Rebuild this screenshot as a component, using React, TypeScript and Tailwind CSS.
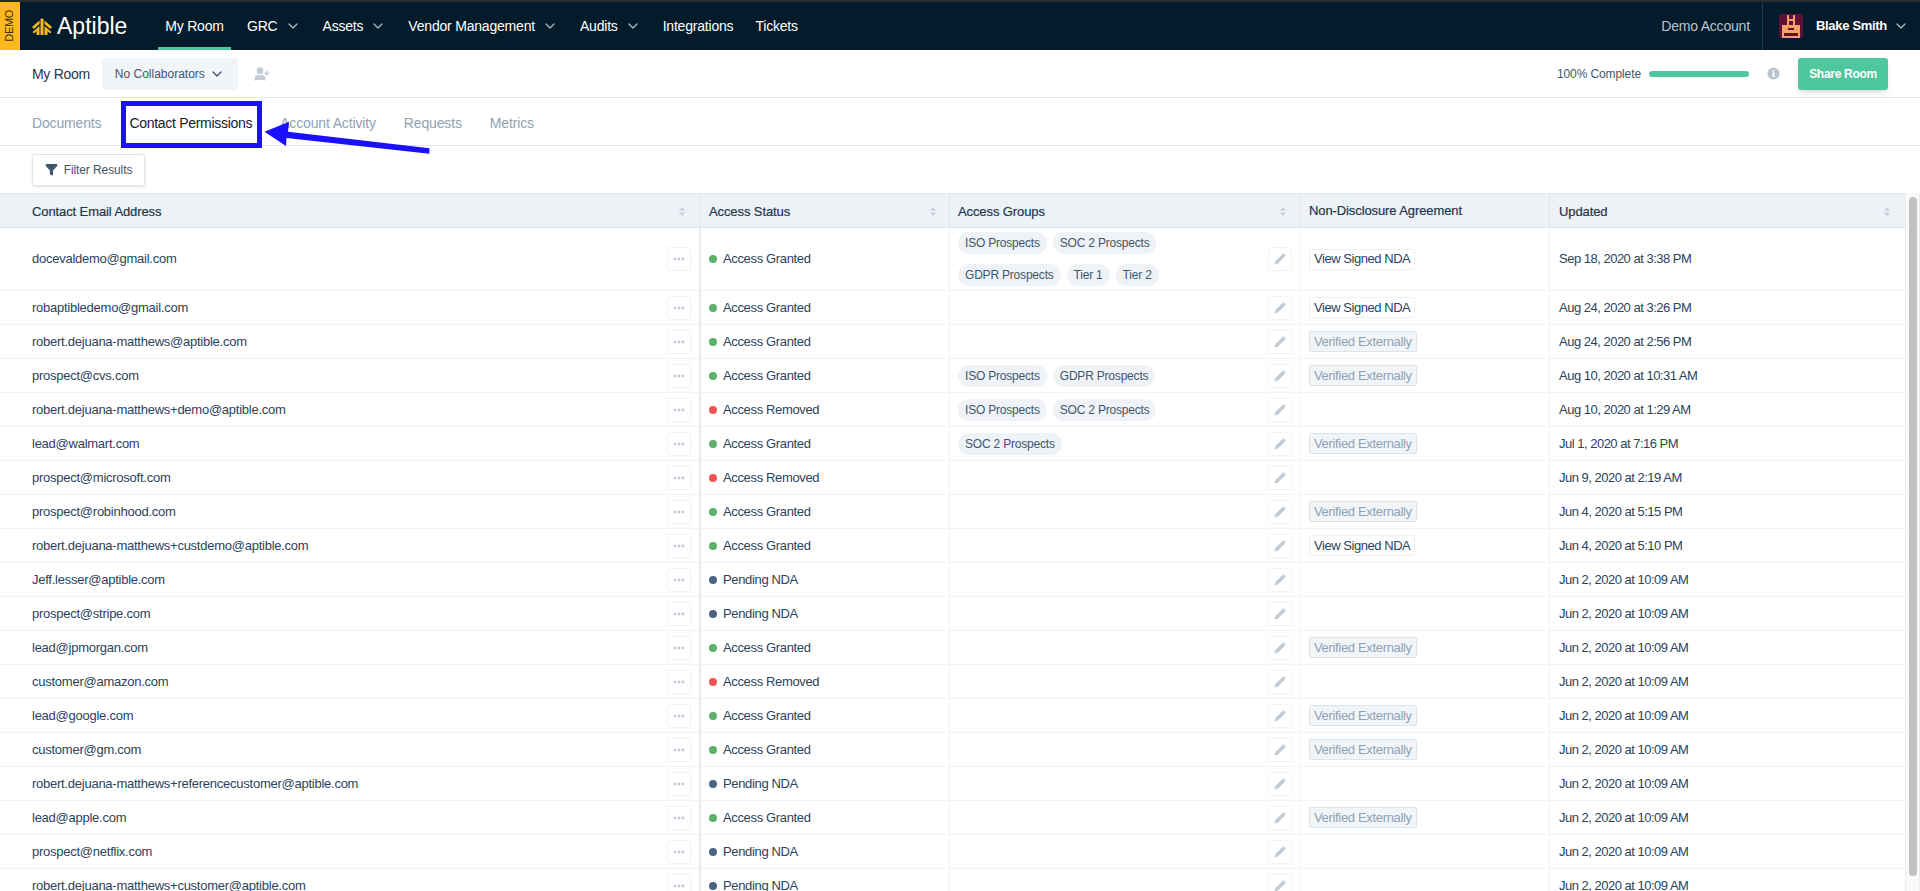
import { ChevronDown, Filter, Pencil, UserPlus } from 'lucide-react';

type Status = 'granted' | 'removed' | 'pending';
type Nda = 'signed' | 'verified' | null;

interface Row {
    email: string;
    status: Status;
    groups: string[][];
    nda: Nda;
    updated: string;
}

const navItems = [
    { label: 'GRC', caret: true },
    { label: 'Assets', caret: true },
    { label: 'Vendor Management', caret: true },
    { label: 'Audits', caret: true },
    { label: 'Integrations', caret: false },
    { label: 'Tickets', caret: false },
];

const rows: Row[] = [
    { email: 'docevaldemo@gmail.com', status: 'granted', groups: [['ISO Prospects', 'SOC 2 Prospects'], ['GDPR Prospects', 'Tier 1', 'Tier 2']], nda: 'signed', updated: 'Sep 18, 2020 at 3:38 PM' },
    { email: 'robaptibledemo@gmail.com', status: 'granted', groups: [], nda: 'signed', updated: 'Aug 24, 2020 at 3:26 PM' },
    { email: 'robert.dejuana-matthews@aptible.com', status: 'granted', groups: [], nda: 'verified', updated: 'Aug 24, 2020 at 2:56 PM' },
    { email: 'prospect@cvs.com', status: 'granted', groups: [['ISO Prospects', 'GDPR Prospects']], nda: 'verified', updated: 'Aug 10, 2020 at 10:31 AM' },
    { email: 'robert.dejuana-matthews+demo@aptible.com', status: 'removed', groups: [['ISO Prospects', 'SOC 2 Prospects']], nda: null, updated: 'Aug 10, 2020 at 1:29 AM' },
    { email: 'lead@walmart.com', status: 'granted', groups: [['SOC 2 Prospects']], nda: 'verified', updated: 'Jul 1, 2020 at 7:16 PM' },
    { email: 'prospect@microsoft.com', status: 'removed', groups: [], nda: null, updated: 'Jun 9, 2020 at 2:19 AM' },
    { email: 'prospect@robinhood.com', status: 'granted', groups: [], nda: 'verified', updated: 'Jun 4, 2020 at 5:15 PM' },
    { email: 'robert.dejuana-matthews+custdemo@aptible.com', status: 'granted', groups: [], nda: 'signed', updated: 'Jun 4, 2020 at 5:10 PM' },
    { email: 'Jeff.lesser@aptible.com', status: 'pending', groups: [], nda: null, updated: 'Jun 2, 2020 at 10:09 AM' },
    { email: 'prospect@stripe.com', status: 'pending', groups: [], nda: null, updated: 'Jun 2, 2020 at 10:09 AM' },
    { email: 'lead@jpmorgan.com', status: 'granted', groups: [], nda: 'verified', updated: 'Jun 2, 2020 at 10:09 AM' },
    { email: 'customer@amazon.com', status: 'removed', groups: [], nda: null, updated: 'Jun 2, 2020 at 10:09 AM' },
    { email: 'lead@google.com', status: 'granted', groups: [], nda: 'verified', updated: 'Jun 2, 2020 at 10:09 AM' },
    { email: 'customer@gm.com', status: 'granted', groups: [], nda: 'verified', updated: 'Jun 2, 2020 at 10:09 AM' },
    { email: 'robert.dejuana-matthews+referencecustomer@aptible.com', status: 'pending', groups: [], nda: null, updated: 'Jun 2, 2020 at 10:09 AM' },
    { email: 'lead@apple.com', status: 'granted', groups: [], nda: 'verified', updated: 'Jun 2, 2020 at 10:09 AM' },
    { email: 'prospect@netflix.com', status: 'pending', groups: [], nda: null, updated: 'Jun 2, 2020 at 10:09 AM' },
    { email: 'robert.dejuana-matthews+customer@aptible.com', status: 'pending', groups: [], nda: null, updated: 'Jun 2, 2020 at 10:09 AM' },
];

const statusInfo: Record<Status, { label: string; dot: string }> = {
    granted: { label: 'Access Granted', dot: 'bg-[#5cb06a]' },
    removed: { label: 'Access Removed', dot: 'bg-[#ef5350]' },
    pending: { label: 'Pending NDA', dot: 'bg-[#4b6580]' },
};

function Logo() {
    return (
        <svg width="20" height="17" viewBox="0 0 20 17" fill="#fdb81e" className="shrink-0">
            <path d="M10 0 L11.5 1.5 L11.5 17 L8.5 17 L8.5 1.5 Z" />
            <path d="M7.5 2.5 L7.5 6 L1.8 11 L0 9 Z" />
            <path d="M12.5 2.5 L12.5 6 L18.2 11 L20 9 Z" />
            <path d="M7.5 8 L7.5 17 L4.5 17 L4.5 13 L2 15.5 L0.5 14 Z" />
            <path d="M12.5 8 L12.5 17 L15.5 17 L15.5 13 L18 15.5 L19.5 14 Z" />
        </svg>
    );
}

function Avatar() {
    return (
        <svg width="24" height="24" viewBox="0 0 24 24" className="shrink-0 rounded-[3px]">
            <rect width="24" height="24" fill="#5e1039" />
            <g fill="#f4a263">
                <rect x="8" y="1" width="2" height="11" />
                <rect x="14" y="1" width="2" height="11" />
                <rect x="8" y="5" width="8" height="2" />
                <rect x="3" y="11" width="18" height="8" />
                <rect x="3" y="19" width="2" height="5" />
                <rect x="19" y="19" width="2" height="5" />
                <rect x="5" y="22" width="14" height="2" />
            </g>
            <rect x="9" y="14" width="6" height="2" fill="#5e1039" />
        </svg>
    );
}

function SortIcon() {
    return (
        <svg width="6" height="9" viewBox="0 0 6 9" fill="#c3ced9" className="shrink-0">
            <path d="M3 0 L6 3.5 L0 3.5 Z" />
            <path d="M3 9 L6 5.5 L0 5.5 Z" />
        </svg>
    );
}

function InfoDot() {
    return (
        <svg width="13" height="13" viewBox="0 0 13 13" className="ml-[18px] shrink-0">
            <circle cx="6.5" cy="6.5" r="6" fill="#b8c4d0" />
            <rect x="5.5" y="5.5" width="2" height="4.5" fill="#ffffff" />
            <rect x="5.5" y="3" width="2" height="1.6" fill="#ffffff" />
        </svg>
    );
}

function HeaderCell({ label, sort = true, className = '' }: { label: string; sort?: boolean; className?: string }) {
    return (
        <div className={`flex items-center justify-between border-r border-[#dfe6ed] pr-[13px] first:pr-[15px] last:border-r-0 last:pr-[15px] ${className}`}>
            <span className="text-[13px] tracking-[-0.1px] text-[#22364b] [-webkit-text-stroke:0.2px_#22364b]">{label}</span>
            {sort && <SortIcon />}
        </div>
    );
}

function IconButton({ children }: { children: React.ReactNode }) {
    return (
        <div className="flex h-6 w-6 shrink-0 items-center justify-center rounded-[2px] border border-[#f1f3f6] bg-white">
            {children}
        </div>
    );
}

function Dots() {
    return (
        <IconButton>
            <svg width="12" height="4" viewBox="0 0 12 4" fill="#c0cad4">
                <circle cx="2" cy="2" r="1.4" />
                <circle cx="6" cy="2" r="1.4" />
                <circle cx="10" cy="2" r="1.4" />
            </svg>
        </IconButton>
    );
}

function TableRow({ row, first }: { row: Row; first: boolean }) {
    const status = statusInfo[row.status];
    return (
        <div className={`grid grid-cols-[701px_249px_350px_250px_1fr] border-b border-[#f1f4f7] text-[13px] text-[#2c435a] ${first ? 'h-[63px]' : 'h-[34px]'}`}>
            <div className="flex items-center justify-between border-r-2 border-[#e6ecf2] pl-8 pr-2">
                <span className="tracking-[-0.25px]">{row.email}</span>
                <Dots />
            </div>
            <div className="flex items-center gap-[6px] border-r border-[#f1f4f7] pl-2">
                <span className={`h-2 w-2 rounded-full ${status.dot}`} />
                <span className="tracking-[-0.35px]">{status.label}</span>
            </div>
            <div className="flex items-center justify-between border-r border-[#f1f4f7] pl-2 pr-[7px]">
                <div className="flex flex-col gap-[10px]">
                    {row.groups.map((line) => (
                        <div key={line.join()} className="flex gap-[6px]">
                            {line.map((group) => (
                                <span key={group} className="flex h-[22px] items-center rounded-full bg-[#eff3f7] px-[7px] text-xs tracking-[-0.2px] text-[#3e566d]">
                                    {group}
                                </span>
                            ))}
                        </div>
                    ))}
                </div>
                <IconButton>
                    <Pencil size={12} fill="#c3ccd5" stroke="#c3ccd5" />
                </IconButton>
            </div>
            <div className="flex items-center border-r border-[#f1f4f7] pl-[9px]">
                {row.nda === 'signed' && (
                    <span className="flex h-[21px] items-center rounded-[2px] border border-[#eef1f4] bg-white px-1 tracking-[-0.45px] text-[#2c435a]">
                        View Signed NDA
                    </span>
                )}
                {row.nda === 'verified' && (
                    <span className="flex h-[21px] items-center rounded-[2px] border border-[#dce4eb] bg-[#f2f5f8] px-1 tracking-[-0.33px] text-[#8ea2b4]">
                        Verified Externally
                    </span>
                )}
            </div>
            <div className="flex items-center pl-[9px] tracking-[-0.5px]">{row.updated}</div>
        </div>
    );
}

export default function App() {
    return (
        <div className="relative flex h-[891px] flex-col overflow-hidden bg-white font-['Liberation_Sans',Arial,sans-serif]">
            <header className="flex h-[50px] shrink-0 items-stretch border-t-2 border-[#2b2b2e] bg-[#031b2b] text-sm tracking-[-0.2px] text-white">
                <div className="flex w-5 items-center justify-center bg-[#fdb81e]">
                    <span className="-rotate-90 text-[11px] tracking-[-0.3px] text-[#3a2c05]">DEMO</span>
                </div>
                <div className="ml-3 flex w-[94px] items-center gap-[5px]">
                    <Logo />
                    <span className="text-[23px] leading-none tracking-normal">Aptible</span>
                </div>
                <nav className="ml-8 flex items-stretch">
                    <div className="flex w-[73px] items-center justify-center border-b-[3px] border-[#4fc79c] pt-[3px]">My Room</div>
                    <div className="ml-4 flex items-stretch gap-[22px]">
                        {navItems.map((item) => (
                            <div key={item.label} className="flex items-center gap-[7px]">
                                <span>{item.label}</span>
                                {item.caret && <ChevronDown size={16} className="text-[#a8b4bf]" />}
                            </div>
                        ))}
                    </div>
                </nav>
                <div className="ml-auto flex items-center pr-3">
                    <span className="text-[#b9c3cb]">Demo Account</span>
                </div>
                <div className="flex items-center border-l border-[#24394b] pl-4 pr-[11px]">
                    <Avatar />
                    <span className="ml-[13px] text-[13px] font-bold tracking-[-0.3px]">Blake Smith</span>
                    <ChevronDown size={16} className="ml-[6px] text-[#a8b4bf]" />
                </div>
            </header>

            <div className="flex h-[48px] shrink-0 items-center border-b border-[#e3e7eb] pl-8 pr-8">
                <span className="text-sm tracking-[-0.3px] text-[#22364b]">My Room</span>
                <button className="ml-3 flex h-8 items-center gap-1 rounded-[3px] bg-[#f2f5f8] px-[13px] text-xs text-[#3e566d]">
                    No Collaborators
                    <ChevronDown size={16} />
                </button>
                <UserPlus size={16} fill="#c3ccd5" stroke="#c3ccd5" className="ml-4" />
                <div className="ml-auto flex items-center">
                    <span className="text-xs tracking-[-0.1px] text-[#3e566d]">100% Complete</span>
                    <div className="ml-2 h-[6px] w-[100px] rounded-full bg-[#4fc79c]" />
                    <InfoDot />
                    <button className="ml-[18px] h-8 w-[90px] rounded-[3px] bg-[#4fc79c] text-xs font-bold tracking-[-0.3px] text-white shadow-md">
                        Share Room
                    </button>
                </div>
            </div>

            <div className="flex h-[48px] shrink-0 items-center gap-7 border-b border-[#e3e7eb] pl-8 pt-[2px] text-sm tracking-[-0.15px] text-[#8ea2b4]">
                <span>Documents</span>
                <span className="tracking-[-0.3px] text-[#10202f]">Contact Permissions</span>
                <span>Account Activity</span>
                <span>Requests</span>
                <span>Metrics</span>
            </div>

            <div className="flex h-[47px] shrink-0 items-center pl-8">
                <button className="flex h-8 w-[113px] items-center justify-center gap-[6px] rounded-[3px] border border-[#dfe6ed] text-xs tracking-[-0.1px] text-[#3e566d] shadow-sm">
                    <Filter size={13} fill="#3e566d" stroke="#3e566d" />
                    Filter Results
                </button>
            </div>

            <div className="flex min-h-0 flex-1">
                <div className="min-w-0 flex-1 overflow-hidden">
                    <div className="grid h-[35px] grid-cols-[701px_249px_350px_250px_1fr] border-y border-[#dfe6ed] bg-[#edf2f6]">
                        <HeaderCell label="Contact Email Address" className="pl-8 pt-[2px]" />
                        <HeaderCell label="Access Status" className="pl-2 pt-[2px]" />
                        <HeaderCell label="Access Groups" className="pl-2 pt-[2px]" />
                        <HeaderCell label="Non-Disclosure Agreement" sort={false} className="pl-[9px]" />
                        <HeaderCell label="Updated" className="pl-[9px] pt-[2px]" />
                    </div>
                    {rows.map((row, index) => (
                        <TableRow key={row.email} row={row} first={index === 0} />
                    ))}
                </div>
                <div className="w-[15px] shrink-0 border-l border-r border-[#ececec] bg-[#fafafa] pb-[15px] pl-[3px] pr-[2px] pt-1">
                    <div className="h-full rounded-full bg-[#c1c1c1]" />
                </div>
            </div>

            {/* Annotation drawn over the screenshot */}
            <div className="absolute left-[121px] top-[101px] h-[47px] w-[141px] border-[5px] border-[#1a0fff]" />
            <svg className="absolute left-[260px] top-[120px]" width="175" height="40" viewBox="0 0 175 40" fill="#1a0fff">
                <path d="M4.5 11.7 L29 1.7 L28 11.7 L169.4 28.3 L169.4 33.7 L26.5 18 L26 26 Z" />
            </svg>
        </div>
    );
}
